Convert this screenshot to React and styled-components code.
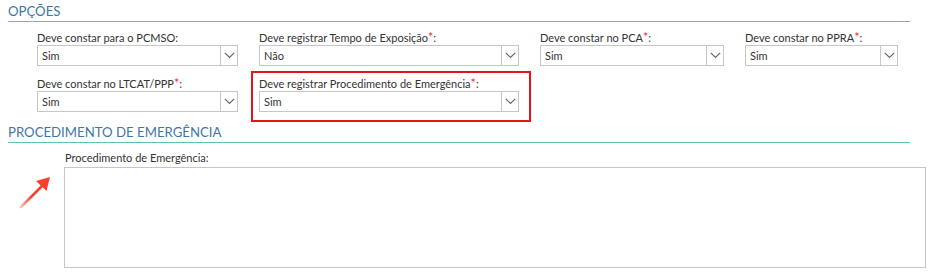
import React from 'react'
import styled, { createGlobalStyle } from 'styled-components'

const GlobalStyle = createGlobalStyle`
    body {
        margin: 0;
        background: #ffffff;
        font-family: Lato, 'Open Sans', sans-serif;
        color: #333333;
    }
`

const Page = styled.div`
    width: 937px;
    height: 279px;
    overflow: hidden;
    padding-top: 3px;
    box-sizing: border-box;
`

const SectionTitle = styled.div`
    margin-left: 8px;
    width: 902px;
    font-size: 13.2px;
    line-height: 17px;
    color: #3f76a3;
    border-bottom: 1px solid #5fc3b3;
    padding-bottom: 1px;
    margin-top: ${(p) => p.top || 0}px;
`

const FieldGrid = styled.div`
    display: grid;
    grid-template-columns: 201px 260px 184px 153px;
    column-gap: 21px;
    row-gap: 11px;
    margin: 9px 0 0 37px;
`

const Field = styled.div`
    position: relative;
    display: flex;
    flex-direction: column;

    ${(p) =>
        p.highlight &&
        `
        &::after {
            content: '';
            position: absolute;
            left: -8px;
            right: -12px;
            top: -6px;
            bottom: -10px;
            border: 2px solid #e2141c;
            pointer-events: none;
        }
    `}
`

const Label = styled.label`
    font-size: 11px;
    line-height: 13px;
    height: 13px;
    margin-bottom: 1px;
    color: #333333;
    white-space: nowrap;
`

const Required = styled.span`
    color: #f0303a;
    font-size: 12.5px;
`

const SelectBox = styled.div`
    display: flex;
    height: 21px;
    border: 1px solid #c6c6c6;
    box-sizing: border-box;
    background: #ffffff;
`

const SelectValue = styled.div`
    flex: 1;
    padding-left: 4px;
    font-size: 11px;
    line-height: 19px;
    color: #333333;
`

const SelectButton = styled.div`
    width: 16px;
    border-left: 1px solid #c6c6c6;
    display: flex;
    align-items: center;
    justify-content: center;
`

const ProcRow = styled.div`
    display: flex;
    margin-top: 8px;
`

const ArrowArea = styled.div`
    width: 64px;
    padding-top: 25px;
    display: flex;
    justify-content: flex-start;
    padding-left: 18px;
    box-sizing: border-box;
`

const ProcField = styled.div`
    display: flex;
    flex-direction: column;
`

const ProcLabel = styled(Label)`
    margin-left: 1px;
    margin-bottom: 3px;
`

const TextArea = styled.textarea`
    width: 862px;
    height: 101px;
    box-sizing: border-box;
    border: 1px solid #c6c6c6;
    resize: none;
    outline: none;
    padding: 4px;
    font-family: inherit;
    font-size: 11px;
`

const Chevron = () => (
    <svg width="11" height="7" viewBox="0 0 11 7">
        <path d="M0.8 0.8 L5.5 5.5 L10.2 0.8" fill="none" stroke="#666666" strokeWidth="1.2" />
    </svg>
)

const RedArrow = () => (
    <svg width="34" height="34" viewBox="0 0 34 34">
        <defs>
            <linearGradient id="tail" x1="0" y1="1" x2="1" y2="0">
                <stop offset="0" stopColor="#f5452f" stopOpacity="0.35" />
                <stop offset="0.5" stopColor="#f5412c" stopOpacity="1" />
            </linearGradient>
        </defs>
        <path d="M3 31 L24 10" stroke="url(#tail)" strokeWidth="2.6" strokeLinecap="round" />
        <path d="M32 1 L28.5 15 L18 5 Z" fill="#f5412c" />
    </svg>
)

const Select = ({ label, required, value, highlight }) => (
    <Field highlight={highlight}>
        <Label>
            {label}
            {required && <Required>*</Required>}:
        </Label>
        <SelectBox>
            <SelectValue>{value}</SelectValue>
            <SelectButton>
                <Chevron />
            </SelectButton>
        </SelectBox>
    </Field>
)

const App = () => {
    return (
        <Page>
            <GlobalStyle />
            <SectionTitle>OPÇÕES</SectionTitle>
            <FieldGrid>
                <Select label="Deve constar para o PCMSO" value="Sim" />
                <Select label="Deve registrar Tempo de Exposição" required value="Não" />
                <Select label="Deve constar no PCA" required value="Sim" />
                <Select label="Deve constar no PPRA" required value="Sim" />
                <Select label="Deve constar no LTCAT/PPP" required value="Sim" />
                <Select label="Deve registrar Procedimento de Emergência" required value="Sim" highlight />
            </FieldGrid>
            <SectionTitle top={12}>PROCEDIMENTO DE EMERGÊNCIA</SectionTitle>
            <ProcRow>
                <ArrowArea>
                    <RedArrow />
                </ArrowArea>
                <ProcField>
                    <ProcLabel>Procedimento de Emergência:</ProcLabel>
                    <TextArea />
                </ProcField>
            </ProcRow>
        </Page>
    )
}

export default App
